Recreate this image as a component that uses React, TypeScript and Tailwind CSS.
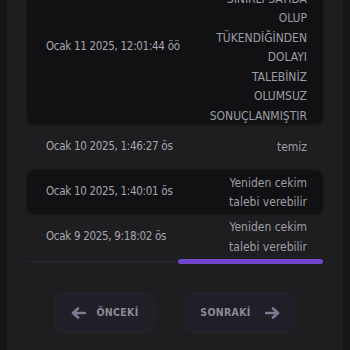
const rows = [
  {
    date: "Ocak 11 2025, 12:01:44 öö",
    lines: ["STOKLARIMIZ", "SINIRLI SAYIDA", "OLUP", "TÜKENDİĞİNDEN", "DOLAYI", "TALEBİNİZ", "OLUMSUZ", "SONUÇLANMIŞTIR"],
    dark: true,
    h: "h-[154px]",
  },
  { date: "Ocak 10 2025, 1:46:27 ös", lines: ["temiz"], dark: false, h: "h-[46px]" },
  { date: "Ocak 10 2025, 1:40:01 ös", lines: ["Yeniden cekim", "talebi verebilir"], dark: true, h: "h-[44px]" },
  { date: "Ocak 9 2025, 9:18:02 ös", lines: ["Yeniden cekim", "talebi verebilir"], dark: false, h: "h-[45px]" },
];

function ArrowLeft() {
  return (
    <svg width="15" height="12" viewBox="0 0 15 12" fill="none">
      <path d="M14 6H3M7 1.5 2 6l5 4.5" stroke="#7e7992" strokeWidth="2.6" strokeLinecap="round" strokeLinejoin="round" />
    </svg>
  );
}

function ArrowRight() {
  return (
    <svg width="15" height="12" viewBox="0 0 15 12" fill="none">
      <path d="M1 6h11M8 1.5 13 6l-5 4.5" stroke="#7e7992" strokeWidth="2.6" strokeLinecap="round" strokeLinejoin="round" />
    </svg>
  );
}

export default function App() {
  return (
    <div className="bg-[#151517] h-[350px] overflow-hidden px-[7px] font-['DejaVu_Sans_Condensed','DejaVu_Sans',sans-serif] font-stretch-condensed">
      <div className="bg-[#1e1e20] h-full px-5 flex flex-col">
        <div className="-mt-[30px]">
          {rows.map((r, i) => (
            <div
              key={i}
              className={`flex items-center justify-between pl-[19px] pr-4 rounded-lg ${r.h} ${
                r.dark ? "bg-[#111113] shadow-[0_1px_3px_rgba(0,0,0,0.35)]" : ""
              }`}
            >
              <span className="text-[11.5px] tracking-[-0.3px] text-[#a6a6ae] whitespace-nowrap">{r.date}</span>
              <div className="pt-[2px] text-right text-[12px] leading-[19.5px] text-[#9d9da5] whitespace-nowrap">
                {r.lines.map((l) => (
                  <div key={l}>{l}</div>
                ))}
              </div>
            </div>
          ))}
        </div>
        <div className="relative h-[5px] shrink-0">
          <div className="absolute left-0 right-0 top-[2px] h-[1px] bg-[#2a2833]" />
          <div className="absolute right-0 top-0 h-[5px] w-[145px] rounded-full bg-[#6f45c9]" />
        </div>
        <div className="flex justify-center gap-[30px] mt-[29px]">
          <button className="w-[100px] h-[40px] flex items-center justify-center gap-[10px] rounded-lg bg-[#201e27] border border-[#26232e] text-[10.5px] font-bold tracking-[0.03em] text-[#8c8a95]">
            <ArrowLeft />
            <span>ÖNCEKİ</span>
          </button>
          <button className="w-[110px] h-[40px] flex items-center justify-center gap-[14px] rounded-lg bg-[#201e27] border border-[#26232e] text-[10.5px] font-bold tracking-[0.03em] text-[#8c8a95]">
            <span>SONRAKİ</span>
            <ArrowRight />
          </button>
        </div>
      </div>
    </div>
  );
}
